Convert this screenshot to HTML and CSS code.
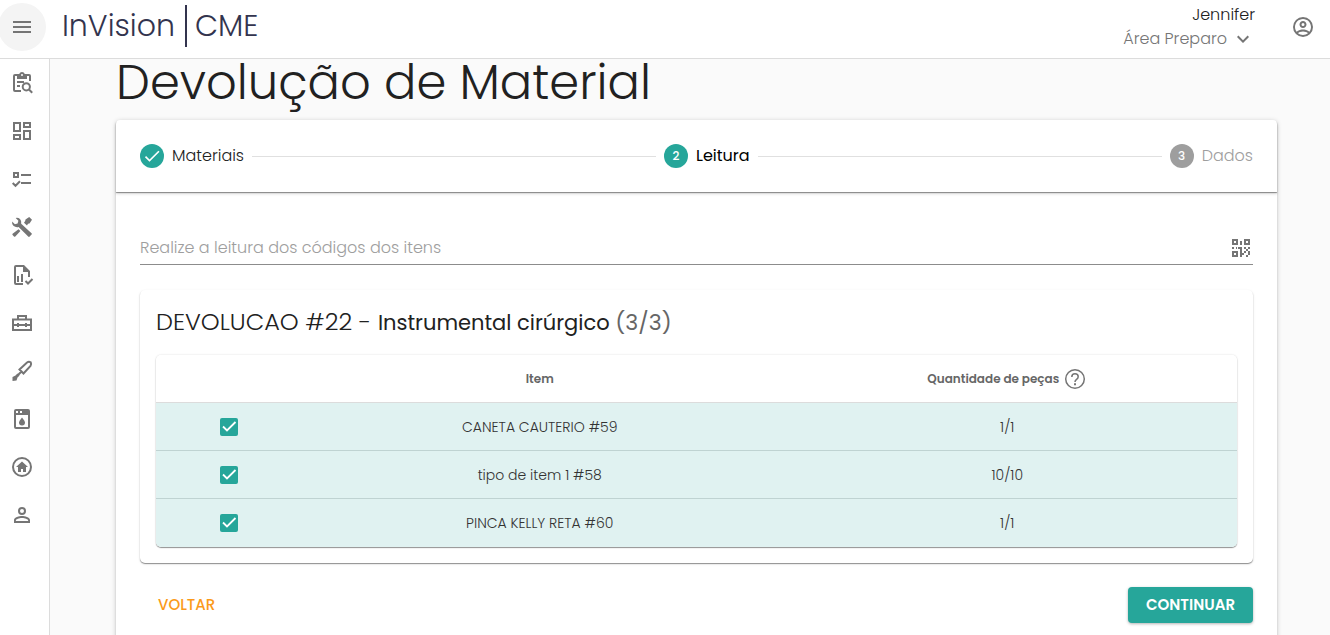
FILE: index.html
```html
<!DOCTYPE html>
<html lang="pt-BR">
<head>
<meta charset="utf-8">
<meta name="viewport" content="width=device-width, initial-scale=1">
<title>InVision CME - Devolução de Material</title>
<link rel="stylesheet" href="styles.css">
</head>
<body>
<header class="topbar">
  <button class="menu-button" type="button" aria-label="Menu"><svg class="icon" viewBox="0 0 24 24"><path d="M3 6H21V8H3zM3 11H21V13H3zM3 16H21V18H3z"/></svg></button>
  <div class="brand"><span>InVision</span><span class="brand-unit">CME</span></div>
  <div class="user">
    <span class="user-name">Jennifer</span>
    <button class="area-button" type="button">Área Preparo <svg class="icon" viewBox="0 0 24 24"><path d="M7.41 8.58L12 13.17L16.59 8.58L18 10L12 16L6 10z"/></svg></button>
  </div>
  <button class="account-button" type="button" aria-label="Conta"><svg class="icon" viewBox="0 0 24 24"><path d="M12,2A10,10 0 0,0 2,12A10,10 0 0,0 12,22A10,10 0 0,0 22,12A10,10 0 0,0 12,2M7.07,18.28C7.5,17.38 10.12,16.5 12,16.5C13.88,16.5 16.5,17.38 16.93,18.28C15.57,19.36 13.86,20 12,20C10.14,20 8.43,19.36 7.07,18.28M18.36,16.83C16.93,15.09 13.46,14.5 12,14.5C10.54,14.5 7.07,15.09 5.64,16.83C4.62,15.5 4,13.82 4,12C4,7.59 7.59,4 12,4C16.41,4 20,7.59 20,12C20,13.82 19.38,15.5 18.36,16.83M12,6C10.06,6 8.5,7.56 8.5,9.5C8.5,11.44 10.06,13 12,13C13.94,13 15.5,11.44 15.5,9.5C15.5,7.56 13.94,6 12,6M12,11A1.5,1.5 0 0,1 10.5,9.5A1.5,1.5 0 0,1 12,8A1.5,1.5 0 0,1 13.5,9.5A1.5,1.5 0 0,1 12,11Z"/></svg></button>
</header>
<div class="shell">
  <nav class="sidebar" aria-label="Principal">
    <a class="nav-link" href="#" aria-label="Consulta"><svg class="icon" viewBox="0 0 24 24"><path class="line" d="M11 20H5Q4 20 4 19V5Q4 4 5 4H19Q20 4 20 5V10M7 11H14M7 15H10"/><path d="M7 3H9.2A3 3 0 0 1 14.8 3H17V8H7z"/><circle class="line" cx="16.3" cy="15.8" r="3.6"/><path class="line" d="M19 18.500L22.200 21.700"/><circle class="hole" cx="12" cy="4" r="1"/></svg></a>
    <a class="nav-link" href="#" aria-label="Painel"><svg class="icon" viewBox="0 0 24 24"><path d="M19,5V7H15V5H19M9,5V11H5V5H9M19,13V19H15V13H19M9,17V19H5V17H9M21,3H13V9H21V3M11,3H3V13H11V3M21,11H13V21H21V11M11,15H3V21H11V15Z"/></svg></a>
    <a class="nav-link" href="#" aria-label="Tarefas"><svg class="icon" viewBox="0 0 24 24"><path class="line" d="M4 6H8V10H4zM11 8H21M11 16H21M2.700 16L5.500 18.800L10 14.300"/></svg></a>
    <a class="nav-link" href="#" aria-label="Ferramentas"><svg class="icon" viewBox="0 0 24 24"><path d="M21.800 19.300L19.400 21.700Q18.800 22.200 18.200 21.600L8.600 12Q5.600 12.700 3.400 10.700Q1.700 8.900 2.100 6.500L4.900 9.200L7.600 8.400L8.400 5.700L5.700 2.900Q8.200 2.300 10 4.100Q11.800 6.100 11.200 8.800L21.800 18.400zM17 10.400L14 7.700L15.200 6.100L15.500 4.500L19.200 2L22 4.800L19.500 8.500L18 8.800zM8.500 14.200L10.400 16.100L5.300 21.400Q4.700 22 4 21.400L2.600 20Q2 19.300 2.600 18.700z"/></svg></a>
    <a class="nav-link" href="#" aria-label="Relatórios"><svg class="icon" viewBox="0 0 24 24"><path d="M6 2H14L20 8V14H18V9H13V4H6V20H13V22H6Q4 22 4 20V4Q4 2 6 2zM7 13H9V19H7zM11 11H13V19H11z"/><path class="line" d="M15.500 18L18 20.500L22.500 16"/></svg></a>
    <a class="nav-link" href="#" aria-label="Materiais"><svg class="icon" viewBox="0 0 24 24"><path class="line" d="M3 8.500H21V19H3zM8 8V5H16V8M3 14H21"/><path d="M7 12H9V16H7zM15 12H17V16H15z"/></svg></a>
    <a class="nav-link" href="#" aria-label="Instrumentos"><svg class="icon" viewBox="0 0 24 24"><path class="line" d="M9.500 10.500L17 3.500Q18.800 2.300 20.700 3.300Q21.700 5.200 20.500 7L13.500 14.500zM11.500 12.500L7 17"/><path d="M7.500 14.500L9.500 16.500L7.500 18.500L6.500 21.500L2.500 22V18L5.500 16.500z"/></svg></a>
    <a class="nav-link" href="#" aria-label="Lavagem"><svg class="icon" viewBox="0 0 24 24"><path fill-rule="evenodd" d="M6 2H18Q20 2 20 4V20Q20 22 18 22H6Q4 22 4 20V4Q4 2 6 2zM6 8V20H18V8zM6 4V6H8V4zM10 4V6H12V4zM12 10.500Q15 14 15 15.500A3 3 0 0 1 9 15.500Q9 14 12 10.500z"/></svg></a>
    <a class="nav-link" href="#" aria-label="Início"><svg class="icon" viewBox="0 0 24 24"><circle class="line" cx="12" cy="12" r="9"/><path d="M12 6.500L18 12H16V17H13V14H11V17H8V12H6z"/></svg></a>
    <a class="nav-link" href="#" aria-label="Usuários"><svg class="icon" viewBox="0 0 24 24"><path d="M12,4A4,4 0 0,1 16,8A4,4 0 0,1 12,12A4,4 0 0,1 8,8A4,4 0 0,1 12,4M12,6A2,2 0 0,0 10,8A2,2 0 0,0 12,10A2,2 0 0,0 14,8A2,2 0 0,0 12,6M12,13C14.67,13 20,14.33 20,17V20H4V17C4,14.33 9.33,13 12,13M12,14.9C9.03,14.9 5.9,16.36 5.9,17V18.1H18.1V17C18.1,16.36 14.97,14.9 12,14.9Z"/></svg></a>
  </nav>
  <main class="content">
    <h1 class="page-title">Devolução de Material</h1>
    <section class="panel">
      <ol class="stepper">
        <li class="step"><span class="badge"><svg class="badge-check" viewBox="0 0 24 24"><path d="M21 7L9 19L3.500 13.500L4.910 12.090L9 16.170L19.590 5.590z"/></svg></span>Materiais</li>
        <li class="rule" aria-hidden="true"></li>
        <li class="step step-active" aria-current="step"><span class="badge">2</span>Leitura</li>
        <li class="rule" aria-hidden="true"></li>
        <li class="step step-pending"><span class="badge">3</span>Dados</li>
      </ol>
      <div class="panel-body">
        <div class="scan">
          <input class="scan-input" type="text" aria-label="Realize a leitura dos códigos dos itens" placeholder="Realize a leitura dos códigos dos itens">
          <svg class="icon" viewBox="0 0 24 24"><path fill-rule="evenodd" d="M3 3H9V9H3zM5 5V7H7V5zM15 3H21V9H15zM17 5V7H19V5zM3 15H9V21H3zM5 17V19H7V17zM11 5H13V9H11zM3 11H5V13H3zM9 11H13V15H11V13H9zM7 11H8V13H7zM15 11H17V13H15zM19 11H21V13H19zM17 13H19V15H17zM15 15H17V17H15V19H13V21H11V15H13V17H15zM19 15H21V19H19zM17 19H19V21H17z"/></svg>
        </div>
        <section class="group">
          <h2 class="group-title">DEVOLUCAO #22 - <span class="group-kind">Instrumental cirúrgico <span class="group-count">(3/3)</span></span></h2>
          <table class="items">
            <colgroup><col class="col-check"><col class="col-item"><col></colgroup>
            <thead><tr><th></th><th>Item</th><th><span class="quantity-head">Quantidade de peças <svg class="icon" viewBox="0 0 24 24"><circle class="line thin" cx="12" cy="12" r="9.300"/><path class="line thin" d="M8.800 10Q8.800 6.800 12 6.800T15.200 9.800Q15.200 11.200 13.600 12.400T12 15"/><path d="M11 16.200H13V18.200H11z"/></svg></span></th></tr></thead>
            <tbody>
              <tr><td><input class="check" type="checkbox" checked aria-label="CANETA CAUTERIO #59"></td><td>CANETA CAUTERIO #59</td><td>1/1</td></tr>
              <tr><td><input class="check" type="checkbox" checked aria-label="tipo de item 1 #58"></td><td>tipo de item 1 #58</td><td>10/10</td></tr>
              <tr><td><input class="check" type="checkbox" checked aria-label="PINCA KELLY RETA #60"></td><td>PINCA KELLY RETA #60</td><td>1/1</td></tr>
            </tbody>
          </table>
        </section>
        <div class="actions">
          <button class="button button-text" type="button">VOLTAR</button>
          <button class="button button-primary" type="button">CONTINUAR</button>
        </div>
      </div>
    </section>
  </main>
</div>
</body>
</html>
```
FILE: styles.css
```css
* { box-sizing: border-box; }
body {
  margin: 0;
  height: 100vh;
  overflow: hidden;
  display: flex;
  flex-direction: column;
  background: #fafafa;
  color: #212121;
  font-family: Poppins, Inter, "Open Sans", sans-serif;
  font-size: 16px;
  font-weight: 300;
  line-height: 24px;
}
button, input { font: inherit; color: inherit; }
button { border: 0; background: none; padding: 0; cursor: pointer; }
.icon { width: 24px; height: 24px; fill: #757575; flex: none; }
.line { fill: none; stroke: #757575; stroke-width: 2; }
.thin { stroke-width: 1.5; }
.hole { fill: #fff; }

.topbar {
  flex: none;
  display: flex;
  align-items: center;
  height: 59px;
  padding: 0 15px 5px 0;
  background: #fff;
  border-bottom: 1px solid #dcdcdc;
}
.menu-button {
  display: grid;
  place-items: center;
  width: 48px;
  height: 48px;
  margin-left: -2px;
  border-radius: 50%;
  background: #f4f4f4;
}
.brand {
  display: flex;
  align-items: center;
  margin-left: 16px;
  padding-bottom: 2px;
  color: #33344e;
  font-size: 30px;
  line-height: 42px;
}
.brand-unit {
  margin-left: 10px;
  padding-left: 8px;
  border-left: 2px solid #33344e;
}
.user {
  display: flex;
  flex-direction: column;
  align-items: flex-end;
  margin-left: auto;
}
.area-button { display: flex; align-items: center; gap: 4px; color: #757575; }
.account-button { display: grid; place-items: center; width: 24px; height: 24px; margin-left: 36px; }

.shell { flex: 1; display: flex; min-height: 0; }
.sidebar { flex: none; width: 50px; background: #fff; border-right: 1px solid #dcdcdc; }
.nav-link { display: flex; align-items: center; height: 48px; padding-left: 10px; }
.content { flex: 1; min-width: 0; padding: 0 53px 0 66px; }
.page-title { margin: 0; padding-bottom: 13px; font-size: 48px; font-weight: 300; line-height: 48px; }

.panel { background: #fff; border-radius: 4px; box-shadow: 0 1px 5px rgba(0, 0, 0, .2), 0 2px 2px rgba(0, 0, 0, .12); }
.stepper {
  display: flex;
  align-items: center;
  gap: 8px;
  height: 72px;
  margin: 0;
  padding: 0 24px;
  list-style: none;
  border-radius: 4px 4px 0 0;
  box-shadow: 0 1px 1px rgba(0, 0, 0, .4), 0 2px 3px rgba(0, 0, 0, .14);
}
.step { display: flex; align-items: center; gap: 8px; }
.step-active { color: #000; font-weight: 400; }
.step-pending { color: #9e9e9e; }
.badge {
  display: grid;
  place-items: center;
  width: 24px;
  height: 24px;
  border-radius: 50%;
  background: #26a69a;
  color: #fff;
  font-size: 12px;
  font-weight: 500;
}
.step-pending .badge { background: #9e9e9e; }
.badge-check { width: 20px; height: 20px; fill: #fff; }
.rule { flex: 1; height: 1px; background: #e0e0e0; }

.panel-body { padding: 40px 24px 24px; }
.scan { display: flex; align-items: center; height: 33px; border-bottom: 1px solid #8c8c8c; }
.scan-input { flex: 1; min-width: 0; padding: 0; border: 0; outline: 0; background: none; }
.scan-input::placeholder { color: #9e9e9e; opacity: 1; }

.group {
  margin-top: 25px;
  padding: 16px;
  border-radius: 5px;
  box-shadow: 0 1px 1px rgba(0, 0, 0, .4), 0 1px 3px rgba(0, 0, 0, .1);
}
.group-title { margin: 0 0 16px; font-size: 24px; font-weight: 300; line-height: 32px; }
.group-kind { font-size: 21px; font-weight: 400; }
.group-count { color: #666; font-size: 22px; }

.items {
  width: 100%;
  table-layout: fixed;
  border-spacing: 0;
  border-radius: 5px;
  overflow: hidden;
  box-shadow: 0 1px 1px rgba(0, 0, 0, .4), 0 0 2px rgba(0, 0, 0, .16);
}
.col-check { width: 13.5%; }
.col-item { width: 44%; }
.items th, .items td { height: 48px; padding: 0; text-align: center; vertical-align: middle; border-bottom: 1px solid #bfd3d2; }
.items th { background: #fff; color: #666; font-size: 12px; font-weight: 600; }
.items td { background: #e0f2f1; color: #333; font-size: 14px; }
.items tbody tr:last-child td { border-bottom: 0; }
.items thead th { border-bottom-color: #dcdcdc; }
.quantity-head { display: flex; align-items: center; justify-content: center; gap: 4px; }
.check {
  appearance: none;
  display: block;
  width: 18px;
  height: 18px;
  margin: 0 auto;
  border: 2px solid #757575;
  border-radius: 2px;
}
.check:checked {
  border: 0;
  background: #26a69a url("data:image/svg+xml,%3Csvg xmlns='http://www.w3.org/2000/svg' viewBox='0 0 18 18'%3E%3Cpath d='M3 8.500L7 12.500L15.500 4' fill='none' stroke='white' stroke-width='1.800'/%3E%3C/svg%3E") center / 18px;
}

.actions { display: flex; justify-content: space-between; margin-top: 24px; }
.button { height: 36px; padding: 0 18px; border-radius: 4px; font-size: 15px; font-weight: 500; }
.button-text { color: #fb9a1a; }
.button-primary { background: #26a69a; color: #fff; font-weight: 600; box-shadow: 0 1px 3px rgba(0, 0, 0, .3); }
```
